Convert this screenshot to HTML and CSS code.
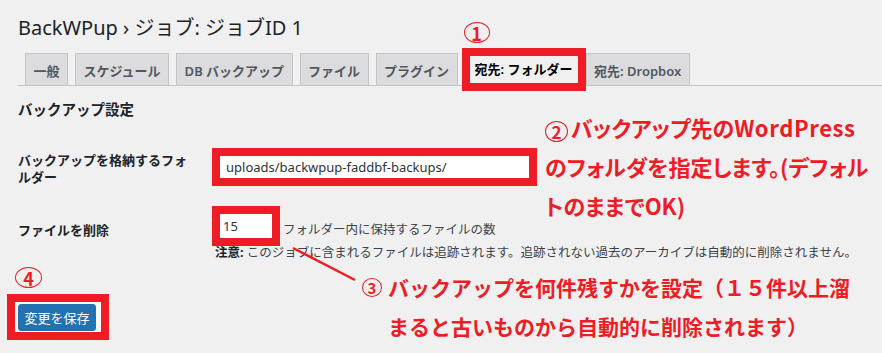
FILE: index.html
```html
<!doctype html>
<html lang="ja">
<head>
    <meta charset="utf-8">
    <meta name="viewport" content="width=device-width, initial-scale=1">
    <title>BackWPup › ジョブ: ジョブID 1</title>
    <link rel="stylesheet" href="styles.css">
</head>
<body>

<main class="wrap">
    <h1 class="title">BackWPup › ジョブ: ジョブID 1</h1>

    <nav class="tabs">
        <a class="tab" href="#">一般</a>
        <a class="tab" href="#">スケジュール</a>
        <a class="tab" href="#">DB バックアップ</a>
        <a class="tab" href="#">ファイル</a>
        <a class="tab" href="#">プラグイン</a>
        <a class="tab tab-active" href="#">宛先: フォルダー<span class="num num-tab">1</span></a>
        <a class="tab" href="#">宛先: Dropbox</a>
    </nav>

    <h2 class="section-title">バックアップ設定</h2>

    <div class="form">
        <div class="row row-folder">
            <label class="label" for="backupdir">バックアップを格納するフォルダー</label>
            <div class="field">
                <span class="mark"><input class="text-input input-wide" id="backupdir" type="text" value="uploads/backwpup-faddbf-backups/"></span>
            </div>
        </div>
        <div class="row row-max">
            <label class="label" for="maxbackups">ファイルを削除</label>
            <div class="field">
                <div class="inline">
                    <span class="mark"><input class="text-input input-small" id="maxbackups" type="text" value="15"></span>
                    <span class="desc">フォルダー内に保持するファイルの数</span>
                </div>
                <p class="note"><strong>注意:</strong> このジョブに含まれるファイルは追跡されます。追跡されない過去のアーカイブは自動的に削除されません。</p>
            </div>
        </div>
    </div>

    <div class="submit">
        <span class="num num-save">4</span>
        <span class="mark mark-button"><button class="button-primary" type="submit">変更を保存</button></span>
    </div>

    <!-- annotations -->
    <p class="callout callout-folder"><span class="num num-inline">2</span>バックアップ先の<span class="latin">WordPress</span><br>のフォルダを指定します。(デフォル<br>トのままでOK)</p>

    <div class="callout callout-max">
        <span class="num num-inline num-small">3</span>
        <p>バックアップを何件残すかを設定（１５件以上溜<br>まると古いものから自動的に削除されます）</p>
    </div>

    <svg class="pointer" width="72" height="40" viewBox="0 0 72 40">
        <line x1="5" y1="4" x2="67" y2="36" stroke="#ee1c25" stroke-width="2.5"/>
    </svg>
</main>

</body>
</html>
```

FILE: styles.css
```css
*, *:before, *:after {
    box-sizing: border-box;
    margin: 0;
    padding: 0;
}

body {
    font-family: "Noto Sans", "Noto Sans CJK JP", sans-serif;
    background: #f0f0f1;
    color: #1d2327;
    overflow: hidden;
}

.wrap {
    position: relative;
    min-height: 353px;
    padding-left: 18px;
}

.title {
    padding-top: 15px;
    font-size: 20px;
    line-height: 26px;
    font-weight: 400;
    color: #1d2327;
}

.tabs {
    display: flex;
    align-items: flex-end;
    margin-top: 7px;
    border-bottom: 1px solid #c3c4c7;
}

.tab {
    display: block;
    margin-left: 7px;
    padding: 3px 7.5px 0;
    border: 1px solid #c3c4c7;
    border-bottom: none;
    background: #dcdcde;
    color: #50575e;
    font-size: 13px;
    font-weight: 600;
    line-height: 28px;
    text-decoration: none;
    white-space: nowrap;
}

.tab-active {
    position: relative;
    margin-left: 4px;
    margin-bottom: -6px;
    padding: 0 5px;
    border: 8px solid #ee1c25;
    background: #f0f0f1;
    color: #000;
    line-height: 27px;
}

.tab-active + .tab {
    margin-left: 0;
}

.section-title {
    margin-top: 14px;
    font-size: 14.5px;
    line-height: 19px;
    font-weight: 700;
}

.form {
    margin-top: 29px;
}

.row {
    display: grid;
    grid-template-columns: 194px 1fr;
}

.row-max {
    margin-top: 20px;
}

.label {
    padding-right: 19px;
    font-size: 13px;
    line-height: 17px;
    font-weight: 700;
}

.row-folder .label {
    padding-top: 4px;
}

.row-max .label {
    padding-top: 16px;
}

.mark {
    display: inline-block;
    border: 8px solid #ee1c25;
    vertical-align: top;
}

.text-input {
    display: block;
    border: none;
    outline: none;
    background: #fff;
    color: #2c3338;
    font-family: "Noto Sans", sans-serif;
    font-size: 13px;
}

.input-wide {
    width: 309px;
    height: 22px;
    padding: 0 6px;
}

.input-small {
    width: 52px;
    height: 24px;
    padding: 0 3px;
}

.inline {
    display: flex;
    align-items: center;
}

.desc {
    margin: 4px 0 0 3px;
    color: #3c434a;
    font-size: 12.5px;
}

.note {
    margin: -1px 0 0 3px;
    color: #3c434a;
    font-size: 12.5px;
    line-height: 16px;
}

.note strong {
    color: #1d2327;
}

.submit {
    margin-top: 6px;
}

.num {
    display: flex;
    align-items: center;
    justify-content: center;
    border: 1.5px solid #ee1c25;
    border-radius: 50%;
    color: #ee1c25;
    font-family: "Noto Sans CJK JP", sans-serif;
    font-weight: 700;
    line-height: 1;
}

.num-tab {
    position: absolute;
    left: -6px;
    top: -34px;
    width: 26px;
    height: 21px;
    font-size: 18px;
}

.num-save {
    width: 27px;
    height: 21px;
    margin-left: -3px;
    font-size: 18px;
}

.mark-button {
    display: block;
    width: 102px;
    margin: 6px 0 0 -11px;
    padding: 2px 5px 1px 3px;
    background: #f6f7f7;
}

.button-primary {
    display: block;
    width: 78px;
    height: 27px;
    border: 1px solid #2271b1;
    border-radius: 3px;
    background: #2271b1;
    color: #fff;
    font-family: "Noto Sans CJK JP", sans-serif;
    font-size: 13px;
    cursor: pointer;
}

.callout {
    position: absolute;
    color: #ee1c25;
    font-family: "Noto Sans CJK JP", sans-serif;
    font-weight: 700;
    white-space: nowrap;
}

.callout-folder {
    left: 545px;
    top: 108px;
    font-size: 22px;
    line-height: 39px;
    font-feature-settings: "palt";
}

.callout-folder .latin {
    letter-spacing: 0.6px;
}

.callout-max {
    display: flex;
    align-items: flex-start;
    left: 362px;
    top: 268px;
    font-size: 21px;
    line-height: 39px;
}

.num-inline {
    display: inline-flex;
    width: 23px;
    height: 21px;
    margin-right: 3px;
    font-size: 17px;
    vertical-align: -2px;
}

.num-small {
    width: 20px;
    height: 19px;
    margin: 10px 6px 0 0;
    font-size: 15px;
}

.pointer {
    position: absolute;
    left: 288px;
    top: 244px;
}
```
